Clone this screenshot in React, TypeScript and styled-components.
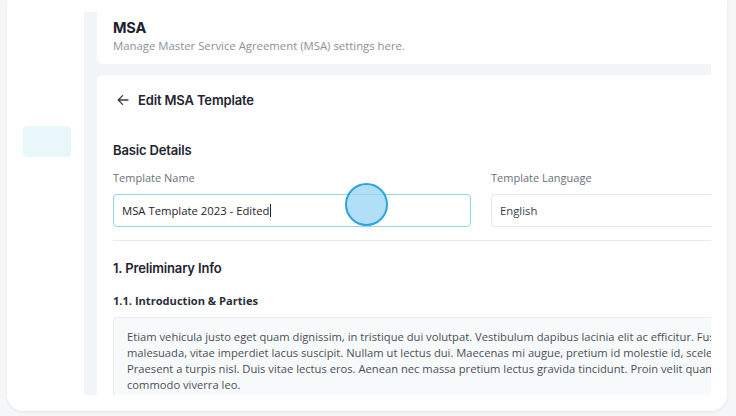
import React from "react";
import styled, { createGlobalStyle } from "styled-components";

const GlobalStyle = createGlobalStyle`
  html, body {
    margin: 0;
    padding: 0;
    background: #f5f6f8;
  }
  body {
    font-family: "Open Sans", "Liberation Sans", sans-serif;
    color: #1f2430;
  }
`;

const Page = styled.div`
  position: relative;
  width: 736px;
  height: 416px;
  overflow: hidden;
  background: #f5f6f8;
`;

const Shell = styled.div`
  display: flex;
  margin: 0 9px 0 7px;
  height: 411px;
  background: #ffffff;
  border-radius: 0 0 16px 16px;
  box-shadow: 0 1px 3px rgba(20, 30, 50, 0.08);
`;

const Sidebar = styled.aside`
  width: 77px;
  flex: none;
  padding: 126px 13px 0 16px;
  box-sizing: border-box;
`;

const NavItem = styled.div<{ $active?: boolean }>`
  height: 31px;
  border-radius: 4px;
  background: ${(p) => (p.$active ? "#e8f8fa" : "transparent")};
`;

const Main = styled.main`
  flex: 1;
  margin: 12px 16px 16px 0;
  padding-left: 13px;
  background: #f2f5f8;
  overflow: hidden;
  display: flex;
  flex-direction: column;
  gap: 11px;
`;

const Card = styled.section<{ $top?: boolean }>`
  flex: none;
  width: 768px;
  box-sizing: border-box;
  background: #ffffff;
  border-radius: ${(p) => (p.$top ? "0 0 6px 6px" : "6px")};
  padding: ${(p) => (p.$top ? "7px 16px 0" : "15px 16px 0")};
  height: ${(p) => (p.$top ? "52px" : "auto")};
`;

const PageTitle = styled.h1`
  margin: 0;
  font-family: Inter, "Liberation Sans", sans-serif;
  font-size: 14.5px;
  font-weight: 700;
  line-height: 18px;
  letter-spacing: -0.2px;
  color: #1c212b;
`;

const PageSub = styled.p`
  margin: 1px 0 0;
  font-size: 11.35px;
  line-height: 16px;
  color: #8b9099;
`;

const BackRow = styled.div`
  display: flex;
  align-items: center;
  gap: 9px;
  height: 20px;
  padding-left: 4px;
`;

const Title = styled.h2<{ $mt?: number }>`
  margin: ${(p) => p.$mt ?? 0}px 0 0;
  font-family: Inter, "Liberation Sans", sans-serif;
  font-size: 13px;
  font-weight: 600;
  line-height: 20px;
  letter-spacing: -0.15px;
  color: #1f2430;
`;

const Fields = styled.div`
  display: grid;
  grid-template-columns: 358px 358px;
  column-gap: 20px;
  margin-top: 10px;
`;

const Field = styled.label`
  display: flex;
  flex-direction: column;
  gap: 8px;
`;

const Label = styled.span`
  font-size: 11px;
  line-height: 16px;
  color: #6b7078;
`;

const Input = styled.div<{ $focus?: boolean }>`
  height: 33px;
  box-sizing: border-box;
  display: flex;
  align-items: center;
  padding: 0 8px;
  border: 1px solid ${(p) => (p.$focus ? "#93d6de" : "#e4e7eb")};
  border-radius: 4px;
  font-size: 11.3px;
  color: ${(p) => (p.$focus ? "#1f2430" : "#3b4048")};
`;

const Caret = styled.span`
  display: inline-block;
  width: 1px;
  height: 13px;
  margin-left: 1px;
  background: #1f2430;
`;

const Divider = styled.hr`
  margin: 13px 0 0;
  border: 0;
  height: 1px;
  background: #e6e8ec;
`;

const SubTitle = styled.h3`
  margin: 15px 0 0;
  font-size: 11.1px;
  font-weight: 700;
  line-height: 16px;
  color: #2a2f38;
`;

const TextBox = styled.div`
  margin-top: 8px;
  padding: 11px 13px 12px;
  background: #f7fafb;
  border: 1px solid #e8ecef;
  border-radius: 4px;
  font-size: 11.2px;
  line-height: 16px;
  color: #4a4f57;
`;

const Line = styled.div`
  white-space: nowrap;
`;

const Pointer = styled.div`
  position: absolute;
  left: 345px;
  top: 183px;
  width: 43px;
  height: 43px;
  box-sizing: border-box;
  border-radius: 50%;
  border: 2px solid #2ba4e0;
  background: rgba(150, 212, 244, 0.75);
`;

const BackArrow = () => (
  <svg width="12" height="12" viewBox="0 0 12 12" fill="none">
    <path
      d="M11 6H1.2M5.6 1.6 1.2 6l4.4 4.4"
      stroke="#3a3f47"
      strokeWidth="1.3"
      strokeLinecap="round"
      strokeLinejoin="round"
    />
  </svg>
);

const paragraph = [
  "Etiam vehicula justo eget quam dignissim, in tristique dui volutpat. Vestibulum dapibus lacinia elit ac efficitur. Fusce at",
  "malesuada, vitae imperdiet lacus suscipit. Nullam ut lectus dui. Maecenas mi augue, pretium id molestie id, scelerisque vel",
  "Praesent a turpis nisl. Duis vitae lectus eros. Aenean nec massa pretium lectus gravida tincidunt. Proin velit quam, in",
  "commodo viverra leo.",
];

export default function App() {
  return (
    <Page>
      <GlobalStyle />
      <Shell>
        <Sidebar>
          <NavItem $active />
        </Sidebar>
        <Main>
          <Card $top>
            <PageTitle>MSA</PageTitle>
            <PageSub>Manage Master Service Agreement (MSA) settings here.</PageSub>
          </Card>
          <Card>
            <BackRow>
              <BackArrow />
              <Title>Edit MSA Template</Title>
            </BackRow>
            <Title $mt={30}>Basic Details</Title>
            <Fields>
              <Field>
                <Label>Template Name</Label>
                <Input $focus>
                  MSA Template 2023 - Edited
                  <Caret />
                </Input>
              </Field>
              <Field>
                <Label>Template Language</Label>
                <Input>English</Input>
              </Field>
            </Fields>
            <Divider />
            <Title $mt={17}>1. Preliminary Info</Title>
            <SubTitle>1.1. Introduction &amp; Parties</SubTitle>
            <TextBox>
              {paragraph.map((l) => (
                <Line key={l}>{l}</Line>
              ))}
            </TextBox>
          </Card>
        </Main>
      </Shell>
      <Pointer />
    </Page>
  );
}
